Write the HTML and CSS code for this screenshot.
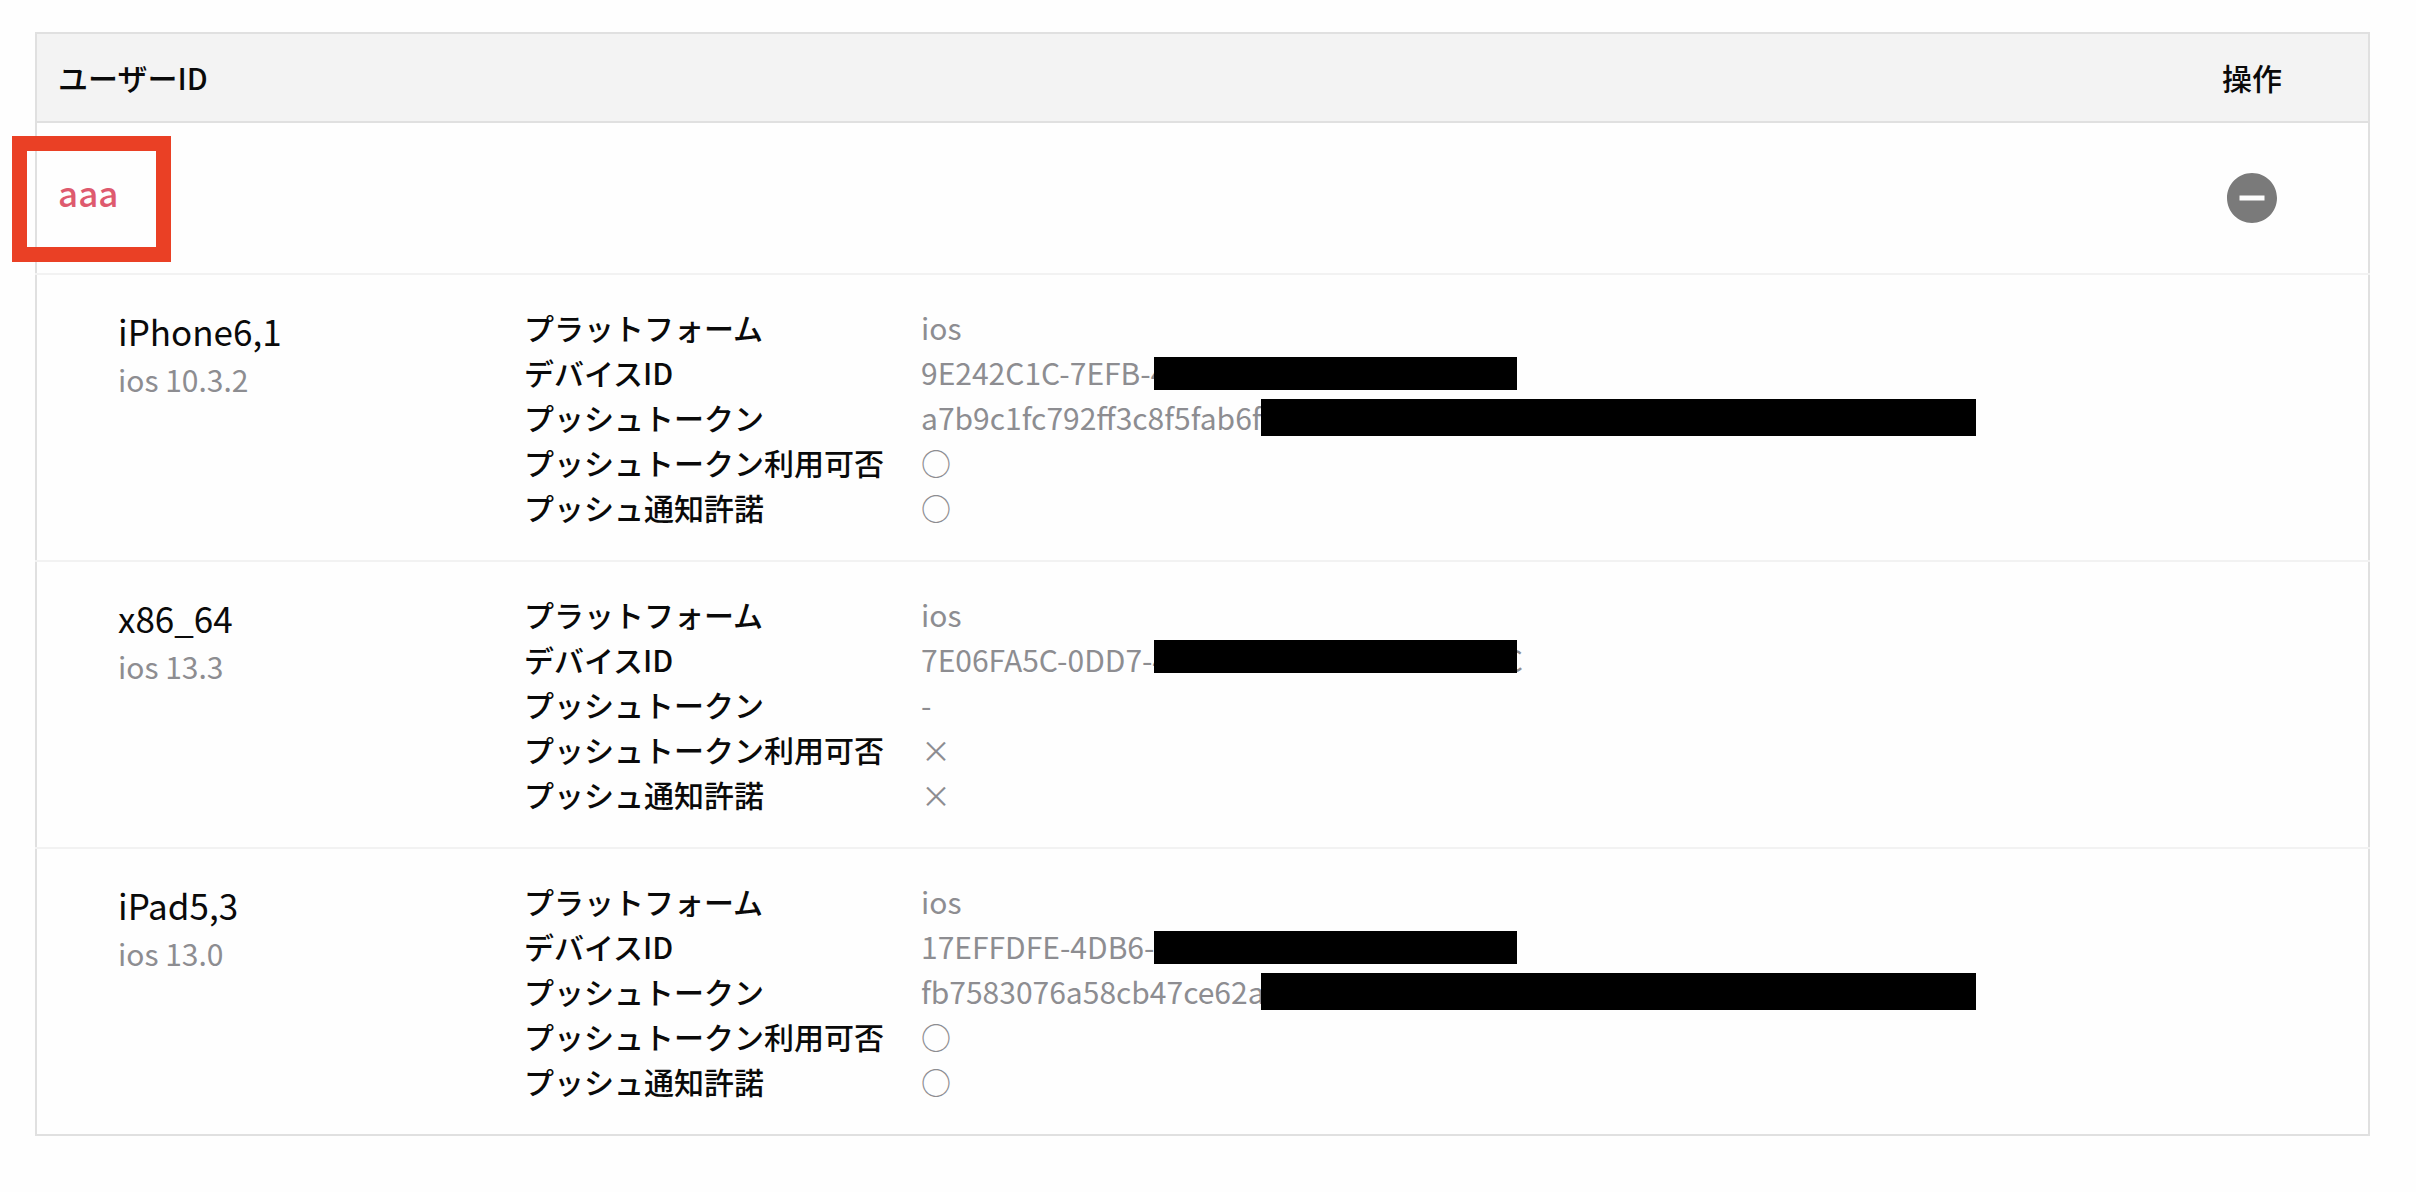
FILE: index.html
```html
<!DOCTYPE html>
<html lang="ja">
<head>
<meta charset="utf-8">
<title>ユーザーID</title>
<link rel="stylesheet" href="styles.css">
</head>
<body>
<main class="page">
  <table class="users">
    <thead>
      <tr><th class="user-col" scope="col">ユーザーID</th><th class="action-col" scope="col">操作</th></tr>
    </thead>
    <tbody>
      <tr class="user-row">
        <td class="user-cell"><a class="user-link" href="#aaa">aaa</a><span class="highlight"></span></td>
        <td class="action-cell">
          <button class="toggle" type="button" aria-label="閉じる">
            <svg viewBox="0 0 24 24" aria-hidden="true"><path d="M12 2C6.48 2 2 6.48 2 12s4.480 10 10 10 10-4.480 10-10S17.520 2 12 2zm5 11H7v-2h10v2z"/></svg>
          </button>
        </td>
      </tr>
      <tr class="device-row">
        <td colspan="2">
          <div class="device">
            <div><div class="name">iPhone6,1</div><div class="os">ios 10.3.2</div></div>
            <dl class="details">
              <dt>プラットフォーム</dt><dd>ios</dd>
              <dt>デバイスID</dt><dd>9E242C1C-7EFB-4<span class="mask mask-id"></span></dd>
              <dt>プッシュトークン</dt><dd>a7b9c1fc792ff3c8f5fab6f<span class="mask mask-token"></span></dd>
              <dt>プッシュトークン利用可否</dt><dd>○</dd>
              <dt>プッシュ通知許諾</dt><dd>○</dd>
            </dl>
          </div>
        </td>
      </tr>
      <tr class="device-row">
        <td colspan="2">
          <div class="device">
            <div><div class="name">x86_64</div><div class="os">ios 13.3</div></div>
            <dl class="details">
              <dt>プラットフォーム</dt><dd>ios</dd>
              <dt>デバイスID</dt><dd class="split"><span>7E06FA5C-0DD7-4</span><span>C</span><span class="mask mask-id mask-high"></span></dd>
              <dt>プッシュトークン</dt><dd>-</dd>
              <dt>プッシュトークン利用可否</dt><dd>×</dd>
              <dt>プッシュ通知許諾</dt><dd>×</dd>
            </dl>
          </div>
        </td>
      </tr>
      <tr class="device-row">
        <td colspan="2">
          <div class="device">
            <div><div class="name">iPad5,3</div><div class="os">ios 13.0</div></div>
            <dl class="details">
              <dt>プラットフォーム</dt><dd>ios</dd>
              <dt>デバイスID</dt><dd>17EFFDFE-4DB6-<span class="mask mask-id"></span></dd>
              <dt>プッシュトークン</dt><dd>fb7583076a58cb47ce62a<span class="mask mask-token"></span></dd>
              <dt>プッシュトークン利用可否</dt><dd>○</dd>
              <dt>プッシュ通知許諾</dt><dd>○</dd>
            </dl>
          </div>
        </td>
      </tr>
    </tbody>
  </table>
</main>
</body>
</html>
```

FILE: styles.css
```css
body {
  margin: 0;
  background: #fefefe;
  color: #0a0a0a;
  font-family: "Noto Sans CJK JP", sans-serif;
  font-size: 30px;
  line-height: 45px;
}

.page {
  padding: 32px 46px 54px 35px;
}

.users {
  width: 100%;
  border: 2px solid #e0e0e0;
  border-collapse: collapse;
}

.users th {
  padding: 21px;
  border-bottom: 2px solid #e0e0e0;
  background: #f3f3f3;
  font-weight: 500;
}

.user-col {
  text-align: left;
}

.users .action-col {
  width: 190px;
}

.users td {
  padding: 0;
}

.user-row td,
.device-row:not(:last-child) td {
  border-bottom: 2px solid #f2f2f2;
}

.users .user-cell {
  position: relative;
  height: 138px;
  padding: 0 21px 12px;
}

.user-link {
  color: #de5a6e;
  font-size: 35px;
  font-weight: 500;
  line-height: 52px;
  text-decoration: none;
}

.highlight {
  position: absolute;
  top: 13px;
  left: -25px;
  box-sizing: border-box;
  width: 159px;
  height: 126px;
  border: 15px solid #ea4025;
}

.action-cell {
  text-align: center;
}

.toggle {
  width: 60px;
  height: 60px;
  padding: 0;
  border: 0;
  background: none;
  vertical-align: middle;
  cursor: pointer;
}

.toggle svg {
  display: block;
  width: 60px;
  height: 60px;
  fill: #7a7a7a;
}

.device {
  display: grid;
  grid-template-columns: 406px 1fr;
  padding: 30px 21px 30px 81px;
}

.name {
  font-size: 35px;
  line-height: 52px;
}

.os {
  color: #8d8d91;
}

.details {
  display: grid;
  grid-template-columns: 397px 1fr;
  margin: 0;
}

dt {
  font-weight: 500;
}

dd {
  position: relative;
  margin: 0;
  color: #8d8d91;
}

.split {
  display: flex;
  justify-content: space-between;
  width: 602px;
}

.mask {
  position: absolute;
  background: #000;
}

.mask-id {
  top: 7px;
  left: 233px;
  width: 363px;
  height: 33px;
}

.mask-high {
  top: 3px;
}

.mask-token {
  top: 4px;
  left: 340px;
  width: 715px;
  height: 37px;
}
```
